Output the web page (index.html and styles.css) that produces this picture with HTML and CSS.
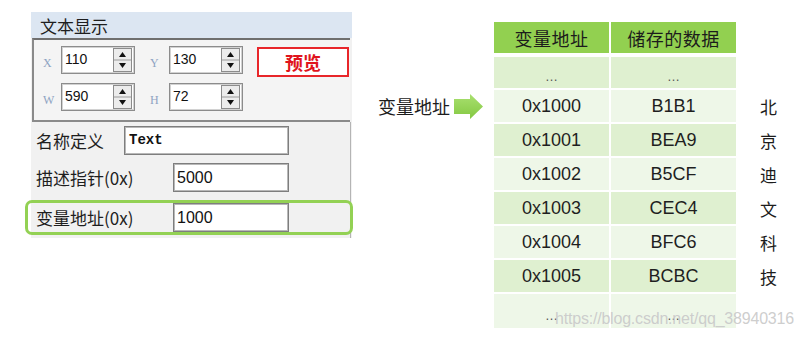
FILE: index.html
```html
<!DOCTYPE html>
<html lang="zh">
<head>
<meta charset="utf-8">
<title>文本显示 - 变量地址</title>
<link rel="stylesheet" href="styles.css">
</head>
<body>
<div class="page">
  <section class="panel">
    <div class="panel-title">文本显示</div>
    <div class="group">
      <div class="geo-row">
        <span class="axis">X</span>
        <div class="spin">
          <span class="spin-val">110</span>
          <svg class="spin-btn" width="19" height="24" viewBox="0 0 19 24"><rect x="0.5" y="0.5" width="18" height="23" fill="#ececec" stroke="#8c8c8c"/><line x1="1" y1="12" x2="18" y2="12" stroke="#9a9a9a"/><polygon points="6,9 13,9 9.5,4" fill="#111"/><polygon points="6,15 13,15 9.5,20" fill="#111"/></svg>
        </div>
        <span class="axis">Y</span>
        <div class="spin">
          <span class="spin-val">130</span>
          <svg class="spin-btn" width="19" height="24" viewBox="0 0 19 24"><rect x="0.5" y="0.5" width="18" height="23" fill="#ececec" stroke="#8c8c8c"/><line x1="1" y1="12" x2="18" y2="12" stroke="#9a9a9a"/><polygon points="6,9 13,9 9.5,4" fill="#111"/><polygon points="6,15 13,15 9.5,20" fill="#111"/></svg>
        </div>
        <button class="preview">预览</button>
      </div>
      <div class="geo-row">
        <span class="axis">W</span>
        <div class="spin">
          <span class="spin-val">590</span>
          <svg class="spin-btn" width="19" height="24" viewBox="0 0 19 24"><rect x="0.5" y="0.5" width="18" height="23" fill="#ececec" stroke="#8c8c8c"/><line x1="1" y1="12" x2="18" y2="12" stroke="#9a9a9a"/><polygon points="6,9 13,9 9.5,4" fill="#111"/><polygon points="6,15 13,15 9.5,20" fill="#111"/></svg>
        </div>
        <span class="axis">H</span>
        <div class="spin">
          <span class="spin-val">72</span>
          <svg class="spin-btn" width="19" height="24" viewBox="0 0 19 24"><rect x="0.5" y="0.5" width="18" height="23" fill="#ececec" stroke="#8c8c8c"/><line x1="1" y1="12" x2="18" y2="12" stroke="#9a9a9a"/><polygon points="6,9 13,9 9.5,4" fill="#111"/><polygon points="6,15 13,15 9.5,20" fill="#111"/></svg>
        </div>
      </div>
    </div>
    <div class="fields">
      <div class="field">
        <span class="field-label short">名称定义</span>
        <span class="field-input wide mono">Text</span>
      </div>
      <div class="field">
        <span class="field-label">描述指针(0x)</span>
        <span class="field-input">5000</span>
      </div>
      <div class="field highlight">
        <span class="field-label">变量地址(0x)</span>
        <span class="field-input">1000</span>
      </div>
    </div>
  </section>

  <section class="memory">
    <div class="cell head c1">变量地址</div>
    <div class="cell head c2">储存的数据</div>

    <div class="cell dark c1 r3 dots">…</div>
    <div class="cell dark c2 r3 dots">…</div>

    <div class="pointer r4">
      <span class="pointer-label">变量地址</span>
      <svg class="arrow" width="30" height="25" viewBox="0 0 30 25"><defs><linearGradient id="ag" x1="0" y1="0" x2="0" y2="1"><stop offset="0" stop-color="#a9e070"/><stop offset="1" stop-color="#84c842"/></linearGradient></defs><polygon points="0,5 16,5 16,0 29,12.5 16,25 16,20 0,20" fill="url(#ag)"/></svg>
    </div>

    <div class="cell light c1 r4">0x1000</div>
    <div class="cell light c2 r4">B1B1</div>
    <div class="char r4">北</div>

    <div class="cell dark c1 r5">0x1001</div>
    <div class="cell dark c2 r5">BEA9</div>
    <div class="char r5">京</div>

    <div class="cell light c1 r6">0x1002</div>
    <div class="cell light c2 r6">B5CF</div>
    <div class="char r6">迪</div>

    <div class="cell dark c1 r7">0x1003</div>
    <div class="cell dark c2 r7">CEC4</div>
    <div class="char r7">文</div>

    <div class="cell light c1 r8">0x1004</div>
    <div class="cell light c2 r8">BFC6</div>
    <div class="char r8">科</div>

    <div class="cell dark c1 r9">0x1005</div>
    <div class="cell dark c2 r9">BCBC</div>
    <div class="char r9">技</div>

    <div class="cell light c1 r10 dots">…</div>
    <div class="cell light c2 r10 dots">…</div>
  </section>
</div>
<div class="watermark">https://blog.csdn.net/qq_38940316</div>
</body>
</html>
```

FILE: styles.css
```css
* { box-sizing: border-box; }

html, body {
  margin: 0;
  padding: 0;
  background: #ffffff;
}

body {
  width: 808px;
  height: 339px;
  overflow: hidden;
  position: relative;
  font-family: "Noto Sans CJK SC", "Liberation Sans", sans-serif;
  color: #222;
}

.page {
  display: flex;
  align-items: flex-start;
}

/* ---------- left panel ---------- */
.panel {
  margin: 12px 0 0 31px;
  width: 321px;
  background: #f1f1f1;
}

.panel-title {
  height: 26px;
  background: #dce6f2;
  padding-left: 9px;
  font-size: 17px;
  line-height: 27px;
  color: #1e1e1e;
}

.group {
  margin-left: 1px;
  margin-right: 2px;
  border-top: 2px solid #6f6f6f;
  border-left: 2px solid #8a8a8a;
  border-bottom: 2px solid #8a8a8a;
  background: #f4f4f4;
  padding: 6px 0 9px 9px;
  display: flex;
  flex-direction: column;
  gap: 9px;
}

.geo-row {
  display: flex;
  align-items: flex-start;
  height: 28px;
}

.axis {
  width: 18px;
  padding-top: 11px;
  font-family: "Liberation Serif", "DejaVu Serif", serif;
  font-size: 12px;
  line-height: 12px;
  color: #8ea3c2;
}

.geo-row .axis + .spin + .axis {
  margin-left: 15px;
  width: 19px;
}

.spin {
  width: 74px;
  height: 28px;
  background: #fff;
  border: 1px solid #8c8c8c;
  box-shadow: inset 0 0 0 1px #d2d2d2;
  display: flex;
  align-items: center;
  justify-content: space-between;
  padding: 0 2px 0 3px;
}

.spin-val {
  font-family: "Liberation Sans", sans-serif;
  font-size: 14px;
  color: #111;
  line-height: 16px;
  padding-bottom: 2px;
}

.spin-btn {
  display: block;
}

.preview {
  margin-left: 14px;
  margin-top: 1px;
  width: 92px;
  height: 30px;
  border: 2px solid #e8262a;
  background: #fff;
  color: #e0141c;
  font-family: "Noto Sans CJK SC", sans-serif;
  font-weight: bold;
  font-size: 18px;
  line-height: 24px;
  padding: 0;
}

.fields {
  padding: 4px 0 3px 5px;
  display: flex;
  flex-direction: column;
  gap: 8px;
  border-right: 1px solid #b4b4b4;
  margin-right: 1px;
}

.field {
  display: flex;
  align-items: center;
  height: 29px;
}

.field-label {
  width: 137px;
  font-size: 17px;
  color: #1e1e1e;
  line-height: 20px;
  white-space: nowrap;
}

.field-label.short {
  width: 88px;
}

.field-input {
  width: 116px;
  height: 29px;
  background: #fff;
  border: 1px solid #7e7e7e;
  box-shadow: inset 0 0 0 1px #b8b8b8;
  font-family: "Liberation Sans", sans-serif;
  font-size: 16px;
  line-height: 27px;
  padding-left: 3px;
  color: #111;
}

.field-input.wide {
  width: 165px;
}

.field-input.mono {
  font-family: "Liberation Mono", "DejaVu Sans Mono", monospace;
  font-weight: bold;
  font-size: 14px;
  padding-left: 4px;
}

.field.highlight {
  height: 35px;
  margin-left: -11px;
  margin-right: -3px;
  border: 3px solid #93d154;
  border-radius: 7px;
  padding-left: 8px;
}

/* ---------- memory table ---------- */
.memory {
  margin: 22px 0 0 26px;
  display: grid;
  grid-template-columns: 114px 115px 125px 40px;
  grid-template-rows: 31px 0px 31px repeat(6, 32px) 34px;
  column-gap: 2px;
  row-gap: 2px;
}

.cell {
  display: flex;
  align-items: center;
  justify-content: center;
  font-family: "Liberation Sans", sans-serif;
  font-size: 18px;
  color: #1f1f1f;
}

.c1 { grid-column: 2; }
.c2 { grid-column: 3; }
.head { grid-row: 1; }
.r3 { grid-row: 3; }
.r4 { grid-row: 4; }
.r5 { grid-row: 5; }
.r6 { grid-row: 6; }
.r7 { grid-row: 7; }
.r8 { grid-row: 8; }
.r9 { grid-row: 9; }
.r10 { grid-row: 10; }

.head {
  background: #92d050;
  font-family: "Noto Sans CJK SC", sans-serif;
  font-size: 18px;
  letter-spacing: 0.5px;
  color: #1c1c1c;
}

.dark { background: #dff0d0; }
.light { background: #eef7e8; }

.dots {
  font-size: 13px;
  color: #555;
  padding-top: 8px;
}

.pointer {
  grid-column: 1;
  display: flex;
  align-items: center;
  gap: 4px;
}

.pointer-label {
  font-size: 18px;
  line-height: 22px;
  color: #1c1c1c;
  white-space: nowrap;
}

.arrow {
  display: block;
}

.char {
  grid-column: 4;
  display: flex;
  align-items: center;
  padding-left: 22px;
  font-size: 17px;
  color: #1c1c1c;
}

.watermark {
  position: absolute;
  left: 555px;
  top: 310px;
  font-family: "Liberation Sans", sans-serif;
  font-size: 16px;
  letter-spacing: -0.2px;
  color: rgba(200, 200, 200, 0.9);
  white-space: nowrap;
}
```
